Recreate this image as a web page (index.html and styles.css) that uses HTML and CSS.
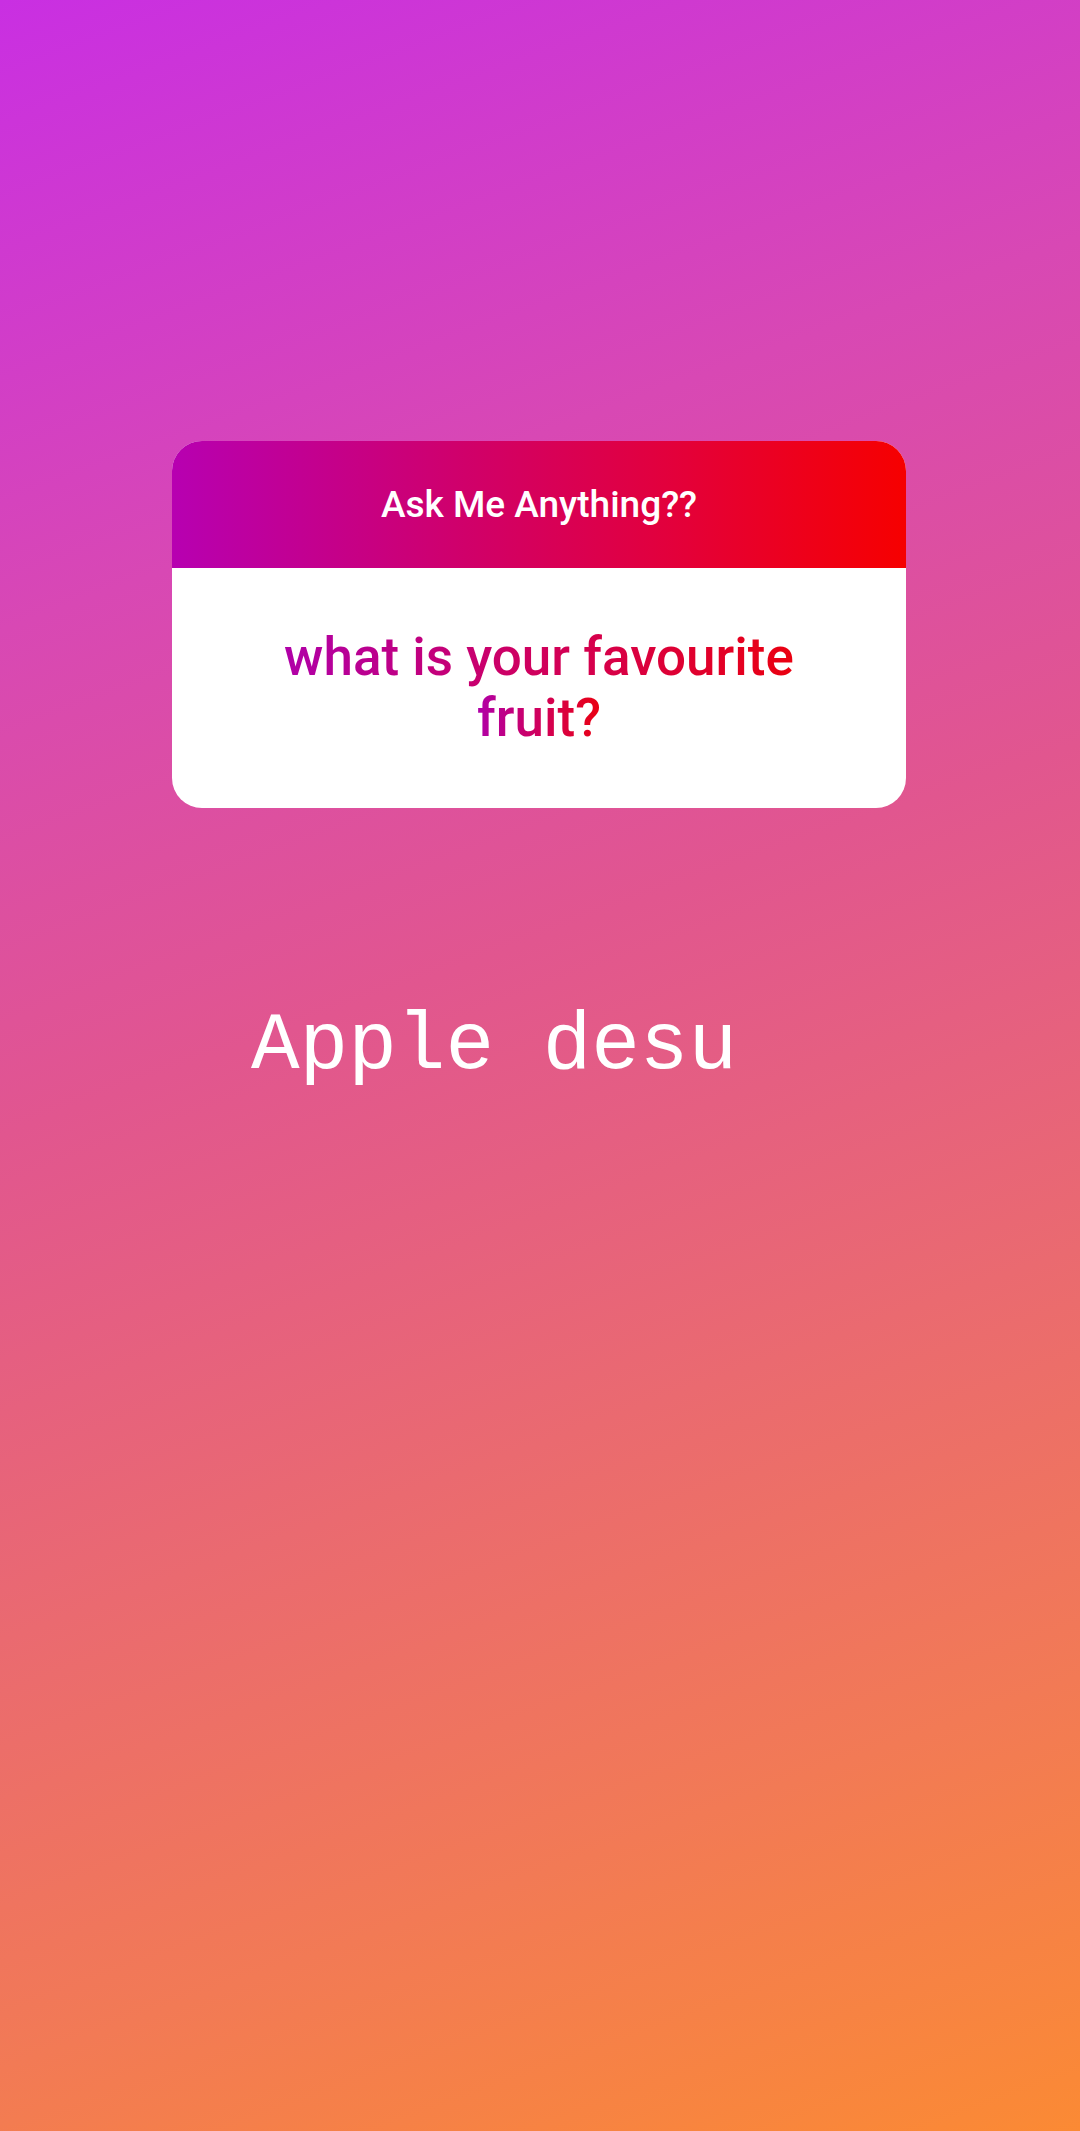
FILE: index.html
```html
<!DOCTYPE html>
<html>
<head>
<meta charset="utf-8">
<link rel="stylesheet" href="styles.css">
</head>
<body>
<main class="screen">
  <section class="card">
    <header class="card-head">Ask Me Anything??</header>
    <div class="card-body">
      <p class="question"><span class="question-text">what is your favourite<br>fruit?</span></p>
    </div>
  </section>
  <p class="answer">Apple desu</p>
</main>
</body>
</html>
```

FILE: styles.css
```css
html, body {
  margin: 0;
  padding: 0;
}
body {
  width: 1080px;
  height: 2131px;
  overflow: hidden;
}
.screen {
  width: 1080px;
  height: 2131px;
  background: linear-gradient(160deg, #c92fe2 0%, #d848b4 25%, #e1568f 45%, #ea6a70 65%, #f27a55 82%, #fb8a34 100%);
  display: flex;
  flex-direction: column;
  align-items: flex-start;
  padding-top: 441px;
  box-sizing: border-box;
}
.card {
  margin-left: 172px;
  width: 734px;
  height: 367px;
  border-radius: 30px;
  overflow: hidden;
  background: #fff;
  display: flex;
  flex-direction: column;
}
.card-head {
  height: 127px;
  background: linear-gradient(90deg, #b700b1 0%, #d0006a 40%, #e40038 70%, #f60000 100%);
  color: #fff;
  font-family: Roboto, "Liberation Sans", sans-serif;
  font-weight: 500;
  font-size: 37px;
  display: flex;
  align-items: center;
  justify-content: center;
}
.card-body {
  flex: 1;
  display: flex;
  align-items: center;
  justify-content: center;
}
.question {
  margin: 0;
  text-align: center;
  font-family: Roboto, "Liberation Sans", sans-serif;
  font-weight: 500;
  font-size: 53px;
  line-height: 61px;
}
.question-text {
  background: linear-gradient(90deg, #b000a8 0%, #d0005c 50%, #ea0010 100%);
  -webkit-box-decoration-break: clone;
  box-decoration-break: clone;
  -webkit-background-clip: text;
  background-clip: text;
  color: transparent;
}
.answer {
  margin: 194px 0 0 251px;
  font-family: "Courier New", "Nimbus Mono PS", "FreeMono", "Liberation Mono", monospace;
  font-size: 81px;
  line-height: 90px;
  color: #fff;
}
```
